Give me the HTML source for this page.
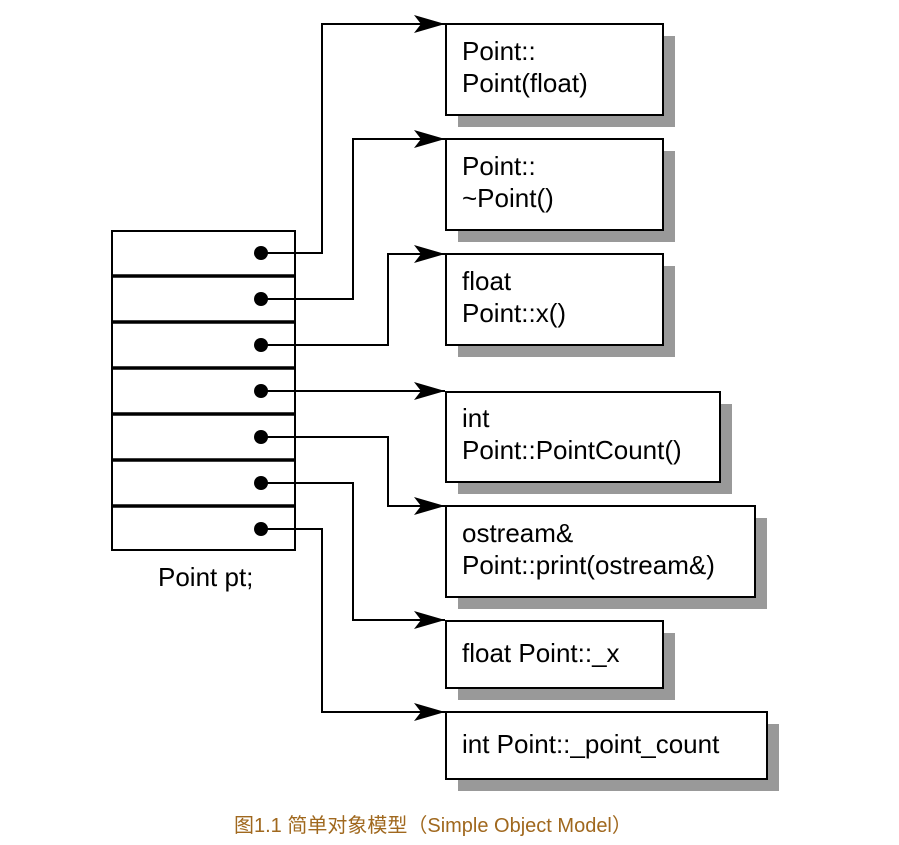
<!DOCTYPE html>
<html><head><meta charset="utf-8"><style>
body{margin:0;background:#fff;width:899px;height:845px;overflow:hidden}
</style></head><body>
<svg width="899" height="845" xmlns="http://www.w3.org/2000/svg" style="position:absolute;left:0;top:0">
<defs><marker id="a" markerWidth="32" markerHeight="18" refX="31" refY="9" orient="auto" markerUnits="userSpaceOnUse"><path d="M0,0 L31,9 L0,18 L7,9 Z" fill="#000"/></marker></defs>
<g fill="#999">
<rect x="458" y="36" width="217" height="91"/>
<rect x="458" y="151" width="217" height="91"/>
<rect x="458" y="266" width="217" height="91"/>
<rect x="458" y="404" width="274" height="90"/>
<rect x="458" y="518" width="309" height="91"/>
<rect x="458" y="633" width="217" height="67"/>
<rect x="458" y="724" width="321" height="67"/>
</g>
<g fill="#fff" stroke="#000" stroke-width="2">
<rect x="446" y="24" width="217" height="91"/>
<rect x="446" y="139" width="217" height="91"/>
<rect x="446" y="254" width="217" height="91"/>
<rect x="446" y="392" width="274" height="90"/>
<rect x="446" y="506" width="309" height="91"/>
<rect x="446" y="621" width="217" height="67"/>
<rect x="446" y="712" width="321" height="67"/>
<rect x="112" y="231" width="183" height="319"/>
</g>
<g stroke="#000" stroke-width="3.5">
<line x1="112" y1="276" x2="295" y2="276"/><line x1="112" y1="322" x2="295" y2="322"/>
<line x1="112" y1="368" x2="295" y2="368"/><line x1="112" y1="414" x2="295" y2="414"/>
<line x1="112" y1="460" x2="295" y2="460"/><line x1="112" y1="506" x2="295" y2="506"/>
</g>
<g fill="#000">
<circle cx="261" cy="253" r="7"/><circle cx="261" cy="299" r="7"/><circle cx="261" cy="345" r="7"/>
<circle cx="261" cy="391" r="7"/><circle cx="261" cy="437" r="7"/><circle cx="261" cy="483" r="7"/><circle cx="261" cy="529" r="7"/>
</g>
<g fill="none" stroke="#000" stroke-width="2" marker-end="url(#a)">
<polyline points="261,253 322,253 322,24 445,24"/>
<polyline points="261,299 353,299 353,139 445,139"/>
<polyline points="261,345 388,345 388,254 445,254"/>
<polyline points="261,391 445,391"/>
<polyline points="261,437 388,437 388,506 445,506"/>
<polyline points="261,483 353,483 353,620 445,620"/>
<polyline points="261,529 322,529 322,712 445,712"/>
</g>
<g font-family="Liberation Sans, Arial, sans-serif" font-size="26" fill="#000">
<text x="462" y="60">Point::</text><text x="462" y="92">Point(float)</text>
<text x="462" y="175">Point::</text><text x="462" y="207">~Point()</text>
<text x="462" y="290">float</text><text x="462" y="322">Point::x()</text>
<text x="462" y="427">int</text><text x="462" y="459">Point::PointCount()</text>
<text x="462" y="542">ostream&amp;</text><text x="462" y="574">Point::print(ostream&amp;)</text>
<text x="462" y="662">float Point::_x</text>
<text x="462" y="753">int Point::_point_count</text>
<text x="158" y="586">Point pt;</text>
</g>
<text x="234" y="832" font-family="Liberation Sans, Noto Sans CJK SC, sans-serif" font-size="20" fill="#a0681e">图1.1 简单对象模型（Simple Object Model）</text>
</svg>
</body></html>
